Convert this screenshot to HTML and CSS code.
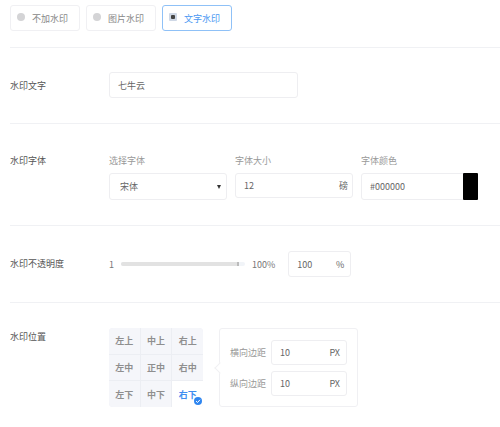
FILE: index.html
```html
<!DOCTYPE html>
<html lang="zh">
<head>
  <meta charset="UTF-8" />
  <title>水印设置</title>
  <link rel="stylesheet" href="styles.css">
</head>
<body>

<div class="tipos">
  <label class="tipo"><span class="radio"></span>不加水印</label>
  <label class="tipo"><span class="radio"></span>图片水印</label>
  <label class="tipo activo"><span class="radio"></span>文字水印</label>
</div>

<section class="fila fila-texto">
  <div class="etiqueta">水印文字</div>
  <div class="caja caja-texto">七牛云</div>
</section>

<section class="fila fila-fuente">
  <div class="etiqueta">水印字体</div>
  <div class="campos">
    <div class="campo">
      <div class="sub">选择字体</div>
      <div class="caja caja-fuente">宋体<span class="flecha"></span></div>
    </div>
    <div class="campo">
      <div class="sub">字体大小</div>
      <div class="caja caja-tamano"><span>12</span><span class="unidad">磅</span></div>
    </div>
    <div class="campo">
      <div class="sub">字体颜色</div>
      <div class="caja caja-color"><span>#000000</span><span class="muestra"></span></div>
    </div>
  </div>
</section>

<section class="fila fila-opacidad">
  <div class="etiqueta">水印不透明度</div>
  <div class="opacidad">
    <span class="num">1</span>
    <div class="barra"><div class="relleno"></div></div>
    <span class="num">100%</span>
    <div class="caja caja-opacidad"><span>100</span><span class="unidad">%</span></div>
  </div>
</section>

<section class="fila fila-posicion">
  <div class="etiqueta">水印位置</div>
  <div class="posicion">
    <div class="rejilla">
      <div class="celda">左上</div>
      <div class="celda">中上</div>
      <div class="celda">右上</div>
      <div class="celda">左中</div>
      <div class="celda">正中</div>
      <div class="celda">右中</div>
      <div class="celda">左下</div>
      <div class="celda">中下</div>
      <div class="celda activa">右下
        <svg class="check" viewBox="0 0 8 8" width="8" height="8">
          <circle cx="4" cy="4" r="4" fill="#2f86f0"/>
          <path d="M2 4.1 L3.5 5.5 L6 2.8" fill="none" stroke="#fff" stroke-width="1"/>
        </svg>
      </div>
    </div>
    <div class="margenes">
      <div class="margen">
        <span class="margen-nombre">横向边距</span>
        <div class="caja caja-margen"><span>10</span><span class="unidad">PX</span></div>
      </div>
      <div class="margen">
        <span class="margen-nombre">纵向边距</span>
        <div class="caja caja-margen"><span>10</span><span class="unidad">PX</span></div>
      </div>
    </div>
  </div>
</section>

</body>
</html>
```

FILE: styles.css
```css
* {
  box-sizing: border-box;
}

body {
  margin: 0;
  padding: 5px 0 0 10px;
  font-family: "Noto Sans CJK SC", "Liberation Sans", sans-serif;
  font-size: 9px;
  color: #666;
  background: #fff;
  overflow: hidden;
}

.tipos {
  display: flex;
  gap: 6px;
  padding-bottom: 16px;
  border-bottom: 1px solid #f0f1f4;
}

.tipo {
  width: 70px;
  height: 26px;
  display: flex;
  align-items: center;
  padding-left: 6px;
  border: 1px solid #f0f0f3;
  border-radius: 3px;
  color: #888;
}

.tipo.activo {
  border-color: #8fc1f7;
  color: #4a97f2;
}

.radio {
  width: 8px;
  height: 8px;
  margin-right: 7px;
  margin-top: -2px;
  border-radius: 50%;
  background: #d4d4d6;
}

.activo .radio {
  border-radius: 1px;
  background: radial-gradient(circle, #444 0 2px, #cfd8e6 2.5px);
}

.fila {
  display: flex;
  border-bottom: 1px solid #f0f1f4;
}

.fila-posicion {
  border-bottom: none;
}

.etiqueta {
  width: 99px;
  flex: none;
  line-height: 16px;
  color: #555;
}

.fila-texto {
  height: 76px;
  padding-top: 24px;
  align-items: flex-start;
}

.fila-texto .etiqueta {
  line-height: 28px;
}

.fila-fuente {
  height: 102px;
  padding-top: 29px;
}

.fila-opacidad {
  height: 77px;
  padding-top: 25px;
}

.fila-opacidad .etiqueta {
  line-height: 26px;
}

.fila-posicion {
  padding-top: 25px;
}

.fila-posicion .etiqueta {
  line-height: 18px;
}

.caja {
  display: flex;
  align-items: center;
  justify-content: space-between;
  height: 26px;
  padding: 0 8px;
  border: 1px solid #eeeef1;
  border-radius: 3px;
  background: #fff;
  color: #666;
}

.caja-texto {
  width: 189px;
}

.campos {
  display: flex;
  gap: 8px;
}

.campo .sub {
  height: 20px;
  line-height: 16px;
  color: #999;
}

.caja-fuente {
  width: 118px;
  height: 27px;
  padding-left: 10px;
  padding-right: 5px;
}

.flecha {
  width: 0;
  height: 0;
  border-left: 2.5px solid transparent;
  border-right: 2.5px solid transparent;
  border-top: 4px solid #333;
}

.caja-tamano {
  width: 118px;
  height: 25px;
  padding-right: 4px;
}

.caja-color {
  width: 117px;
  height: 27px;
  padding-right: 0;
}

.muestra {
  width: 15px;
  height: 27px;
  margin-right: -1px;
  border-radius: 1px;
  background: #000;
}

.opacidad {
  display: flex;
  align-items: center;
  height: 26px;
}

.num {
  color: #777;
}

.barra {
  width: 124px;
  height: 4px;
  margin: 0 7px;
  background: #f1f4f8;
  border-radius: 2px;
}

.relleno {
  width: 118px;
  height: 4px;
  background: #e2e2e2;
  border-right: 2px solid #bbb;
  border-radius: 2px 0 0 2px;
}

.caja-opacidad {
  width: 63px;
  margin-left: 13px;
  padding-right: 6px;
}

.posicion {
  display: flex;
  gap: 16px;
}

.rejilla {
  display: grid;
  grid-template-columns: repeat(3, 1fr);
  grid-template-rows: repeat(3, 1fr);
  gap: 1px;
  width: 94px;
  height: 79px;
  border-radius: 4px;
  overflow: hidden;
  background: #eceef3;
}

.celda {
  position: relative;
  display: flex;
  align-items: center;
  justify-content: center;
  background: #f5f6fa;
  font-weight: bold;
  color: #8f8f8f;
}

.celda.activa {
  background: #fff;
  color: #3f8ef0;
}

.check {
  position: absolute;
  right: 1px;
  bottom: 2px;
}

.margenes {
  position: relative;
  display: flex;
  flex-direction: column;
  justify-content: center;
  gap: 6px;
  width: 139px;
  height: 79px;
  padding-left: 10px;
  border: 1px solid #f0f0f3;
  border-radius: 3px;
}

.margenes::before {
  content: "";
  position: absolute;
  left: -4px;
  top: 35px;
  width: 7px;
  height: 7px;
  background: #fff;
  border-left: 1px solid #f0f0f3;
  border-bottom: 1px solid #f0f0f3;
  transform: rotate(45deg);
}

.margen {
  display: flex;
  align-items: center;
  gap: 5px;
}

.margen-nombre {
  color: #999;
}

.caja-margen {
  width: 76px;
  height: 25px;
  padding-right: 6px;
}
```
